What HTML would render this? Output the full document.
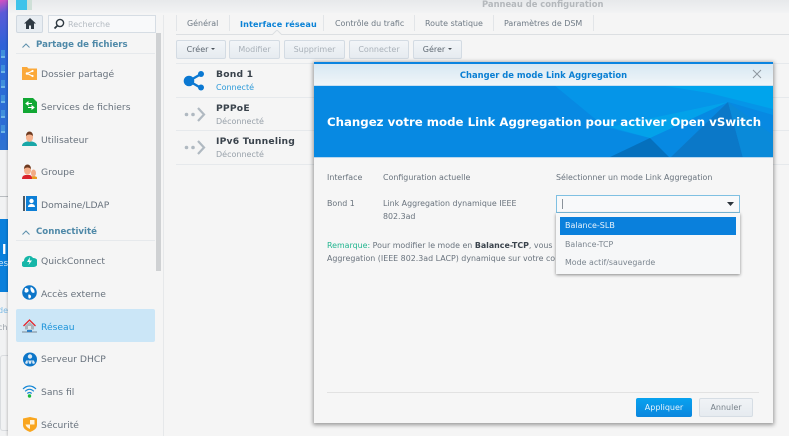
<!DOCTYPE html>
<html><head><meta charset="utf-8"><style>
html,body{margin:0;padding:0;width:789px;height:436px;overflow:hidden;background:#f5f5f5}
body{position:relative;font-family:"DejaVu Sans","Liberation Sans",sans-serif;font-size:9px;color:#6a7480;filter:blur(.35px)}
.a{position:absolute;white-space:nowrap}
.nav{font-size:9.2px;color:#68727d}
.sec{font-size:8.6px;font-weight:bold;color:#4f89a8}
.tab{font-size:7.95px;color:#6f7a85;top:19px}
.sep{position:absolute;width:1px;background:#e2e5e8;top:15px;height:16px}
.btn{position:absolute;top:40px;height:19px;box-sizing:border-box;border:1px solid #d3dbe3;border-radius:2px;background:linear-gradient(#f2f5f8,#e6ebf0);font-size:8px;text-align:center;line-height:17px;color:#5f6973}
.btn.dis{color:#a9b1b9}
.car{display:inline-block;border:2px solid transparent;border-top:2px solid #4a525a;border-bottom:0;margin-left:3px;vertical-align:2px}
.title{font-size:9.2px;font-weight:bold;color:#3a434c;left:216px;letter-spacing:.2px}
.st{font-size:8px;color:#98a1aa;left:216px}
.line{position:absolute;height:1px;background:#e6e9ec}
.m{font-size:7.9px;color:#69737d}
</style></head><body>
<!-- desktop behind -->
<div class="a" style="left:0;top:0;width:8px;height:150px;background:linear-gradient(160deg,#d84fc0 0,#5a5ad8 9%,#2f62d8 30%,#2b6cd6 65%,#2f74d2 100%)"></div>
<div class="a" style="left:1px;top:50px;width:4px;height:90px;background:repeating-linear-gradient(#3f8fdc 0 6px,#6fb6e6 6px 8px,#2b6cd6 8px 15px)"></div>
<div class="a" style="left:0;top:150px;width:8px;height:286px;background:#f1f2f3"></div>
<div class="a" style="left:0;top:196px;width:8px;height:1px;background:#b9bdc1"></div>
<div class="a" style="left:0;top:219px;width:8px;height:73px;background:#0a80dc"></div>
<div class="a" style="top:243px;font-size:13px;font-weight:bold;color:#fff;left:2px">l</div>
<div class="a" style="left:-2px;top:259px;font-size:9px;color:#d5e9f8">es</div>
<div class="a" style="left:-2px;top:306px;font-size:8px;color:#7dbbe6">de</div>
<div class="a" style="left:-2px;top:323px;font-size:8px;color:#9aa2aa">ch</div>
<div class="a" style="left:0;top:355px;width:8px;height:76px;box-sizing:border-box;border:1px solid #d9dcdf;border-right:0;border-radius:3px 0 0 3px"></div>
<!-- window -->
<div class="a" style="left:8px;top:0;width:781px;height:436px;background:#f5f5f5;box-shadow:-1px 0 2px rgba(0,0,0,.18)"></div>
<div class="a" style="left:8px;top:0;width:781px;height:13px;background:linear-gradient(#e7e9eb,#f2f3f4)"></div>
<div class="a" style="left:482px;top:-1px;font-size:8.4px;font-weight:bold;color:#b4b8bc">Panneau de configuration</div>
<div class="a" style="left:16px;top:0;width:16px;height:10px;background:linear-gradient(90deg,#3fc3ea 0 11px,#cfe0d8 11px)"></div>
<!-- home + search -->
<div class="a" style="left:16px;top:15px;width:27px;height:18px;box-sizing:border-box;background:#e8edf2;border:1px solid #d0d8e0;border-radius:2px"></div>
<svg class="a" style="left:23px;top:17px" width="14" height="13" viewBox="0 0 14 13"><path d="M7 1 1 6.500h2V12h3V8.500h2V12h3V6.500h2z" fill="#2f3a44"/></svg>
<div class="a" style="left:48px;top:15px;width:108px;height:18px;box-sizing:border-box;background:#f8f9fa;border:1px solid #d6dde4"></div>
<svg class="a" style="left:53px;top:18px" width="12" height="12" viewBox="0 0 12 12"><circle cx="7" cy="5" r="3.600" fill="none" stroke="#2e3840" stroke-width="1.400"/><path d="M4.500 7.500 1.500 10.500" stroke="#2e3840" stroke-width="1.800"/></svg>
<div class="a" style="left:68px;top:20px;font-size:8px;color:#b4bbc2">Recherche</div>
<!-- sidebar -->
<svg class="a" style="left:21px;top:42px" width="10" height="7"><path d="M1.500 5.500 5 2l3.500 3.500" fill="none" stroke="#5d8fab" stroke-width="1"/></svg>
<div class="a sec" style="left:36px;top:40px">Partage de fichiers</div>
<div class="line" style="left:16px;top:53px;width:139px"></div>
<div class="a" style="left:156px;top:33px;width:5px;height:238px;background:#cfd1d3"></div>
<div class="a" style="left:163px;top:15px;width:1px;height:421px;background:#e6e8ea"></div>

<svg class="a" style="left:22px;top:66px" width="15" height="14"><path d="M0 1h5l1.500 1.500H15V14H0z" fill="#fba93a"/><path d="M5 7.500 10.500 5M5 7.500l5.500 2.500" stroke="#fff" stroke-width="1"/><circle cx="5" cy="7.500" r="1.300" fill="#fff"/><circle cx="10.500" cy="5" r="1.100" fill="#fff"/><circle cx="10.500" cy="10" r="1.100" fill="#fff"/></svg>
<div class="a nav" style="left:41px;top:69px">Dossier partagé</div>
<svg class="a" style="left:23px;top:98px" width="14" height="15"><path d="M0 0h10l4 4v11H0z" fill="#11a733"/><path d="M3 5.500h6M3 5.500l2-1.500v3zM11 9.500H5M11 9.500l-2-1.500v3z" stroke="#fff" fill="#fff" stroke-width="1"/></svg>
<div class="a nav" style="left:41px;top:102px">Services de fichiers</div>
<svg class="a" style="left:22px;top:131px" width="15" height="15"><path d="M0 15c0-3 3-4 5-4.500h5c2 .5 5 1.500 5 4.500z" fill="#19a7a8"/><ellipse cx="7.500" cy="6" rx="3.600" ry="5" fill="#f6b38f"/><path d="M4 5c0-6 7-6 7 0-2-2-5-2-7 0z" fill="#6e3b20"/></svg>
<div class="a nav" style="left:41px;top:135px">Utilisateur</div>
<svg class="a" style="left:22px;top:164px" width="15" height="15"><path d="M9 15c0-3 2-4 6-2v2z" fill="#e99a20"/><ellipse cx="11.500" cy="9" rx="2.500" ry="3.500" fill="#f2ab85"/><path d="M0 15c0-3 2-4 4-4h3c2 0 3 1 3 4z" fill="#d9232c"/><ellipse cx="5.500" cy="6" rx="3.500" ry="4.800" fill="#f4ad88"/><path d="M2 5c0-6 7-6 7 0-2-2-5-2-7 0z" fill="#6d3a1f"/></svg>
<div class="a nav" style="left:41px;top:167px">Groupe</div>
<svg class="a" style="left:23px;top:196px" width="14" height="15"><rect width="2" height="15" fill="#4d5964"/><rect x="3" width="11" height="15" fill="#0d7fd6"/><circle cx="8.500" cy="5" r="2.200" fill="#fff"/><path d="M5 11c0-2 1.500-3 3.500-3S12 9 12 11z" fill="#fff"/></svg>
<div class="a nav" style="left:41px;top:200px">Domaine/LDAP</div>

<svg class="a" style="left:21px;top:229px" width="10" height="7"><path d="M1.500 5.500 5 2l3.500 3.500" fill="none" stroke="#5d8fab" stroke-width="1"/></svg>
<div class="a sec" style="left:36px;top:227px">Connectivité</div>
<div class="line" style="left:16px;top:240px;width:139px"></div>

<svg class="a" style="left:22px;top:254px" width="15" height="13"><path d="M3 13a3 3 0 0 1-1-6 5 5 0 0 1 9-3 4.500 4.500 0 0 1 1 9z" fill="#16b6a8"/><path d="M8 3 5 8h2.500L6.500 11 10 6.500H7.500z" fill="#fff"/></svg>
<div class="a nav" style="left:41px;top:256px">QuickConnect</div>
<svg class="a" style="left:22px;top:285px" width="15" height="15"><circle cx="7.500" cy="7.500" r="7.300" fill="#0d76c9"/><path d="M3 3c2 0 4 1 3.500 3S3 8 2.500 6.500zM9 2c2 1 4 3 3.500 5.500-1.500 1-3 0-3.500-1.500S8 3 9 2zM6.500 9.500c1.500 0 3 1 2.500 2.500s-1.500 1.500-2 1.500-1-2.500-.5-4z" fill="#fff"/></svg>
<div class="a nav" style="left:41px;top:289px">Accès externe</div>
<div class="a" style="left:16px;top:309px;width:139px;height:33px;background:#cbe6f7;border-radius:2px"></div>
<svg class="a" style="left:22px;top:318px" width="15" height="15"><path d="M7.500 4 3 8v3.500h9V8z" fill="#aab4bc"/><path d="M1.500 8 7.500 2l6 6" fill="none" stroke="#e5242c" stroke-width="1.300"/><rect x="6" y="8" width="3" height="3" fill="#dfe5ea"/><path d="M0 14h15" stroke="#7a8894" stroke-width="1"/><rect x="5" y="12" width="5" height="2" fill="#2e7fc4"/></svg>
<div class="a nav" style="left:41px;top:322px;color:#1c93d9">Réseau</div>
<svg class="a" style="left:23px;top:352px" width="14" height="15"><circle cx="7" cy="7.500" r="7" fill="#0d76c9"/><circle cx="7" cy="4.500" r="2.200" fill="#dbe9f4"/><path d="M3 9h8" stroke="#dbe9f4"/><circle cx="3.500" cy="10.500" r="1.300" fill="#dbe9f4"/><circle cx="7" cy="10.500" r="1.300" fill="#dbe9f4"/><circle cx="10.500" cy="10.500" r="1.300" fill="#dbe9f4"/></svg>
<div class="a nav" style="left:41px;top:354px">Serveur DHCP</div>
<svg class="a" style="left:22px;top:384px" width="15" height="14"><path d="M1 5c4-4 9-4 13 0M3.200 7.300c2.700-2.600 5.900-2.600 8.600 0M5.300 9.500c1.400-1.200 3-1.200 4.400 0" fill="none" stroke="#1487d6" stroke-width="1.200"/><circle cx="7.500" cy="12" r="1.700" fill="#19b83c"/></svg>
<div class="a nav" style="left:41px;top:387px">Sans fil</div>
<svg class="a" style="left:23px;top:417px" width="14" height="15"><path d="M0 1.500 7 0l7 1.500V8c0 3.500-3 5.500-7 7-4-1.500-7-3.500-7-7z" fill="#f9a61f"/><path d="M7 3h4.500v4.500H7zM2.500 7.500H7V12c-2.500-1-4-2.500-4.500-4.500z" fill="#fff3dc"/></svg>
<div class="a nav" style="left:41px;top:420px">Sécurité</div>

<!-- tabs -->
<div class="sep" style="left:176px"></div>
<div class="a tab" style="left:187px">Général</div>
<div class="sep" style="left:229px"></div>
<div class="a tab" style="left:240px;color:#0a82d6;font-weight:bold;font-size:8.1px;letter-spacing:.1px">Interface réseau</div>
<div class="sep" style="left:323px"></div>
<div class="a tab" style="left:335px">Contrôle du trafic</div>
<div class="sep" style="left:414px"></div>
<div class="a tab" style="left:425px">Route statique</div>
<div class="sep" style="left:493px"></div>
<div class="a tab" style="left:504px">Paramètres de DSM</div>
<div class="sep" style="left:593px"></div>
<div class="a" style="left:176px;top:34px;width:613px;height:1px;background:#dcdfe2"></div>
<svg class="a" style="left:272px;top:30px" width="10" height="5"><path d="M0 5 5 0l5 5" fill="#f5f5f5" stroke="#dcdfe2"/></svg>

<div class="btn" style="left:176px;width:50px">Créer<span class="car"></span></div>
<div class="btn dis" style="left:229px;width:51px">Modifier</div>
<div class="btn dis" style="left:284px;width:61px">Supprimer</div>
<div class="btn dis" style="left:349px;width:60px">Connecter</div>
<div class="btn" style="left:413px;width:49px">Gérer<span class="car"></span></div>
<div class="line" style="left:176px;top:63px;width:613px"></div>
<div class="line" style="left:176px;top:97px;width:613px"></div>
<div class="line" style="left:176px;top:130px;width:613px"></div>
<div class="line" style="left:176px;top:164px;width:613px"></div>

<svg class="a" style="left:183px;top:70px" width="23" height="22"><path d="M6 11 18 4M6 11l12 7" stroke="#0a78d2" stroke-width="2.400"/><circle cx="6" cy="11" r="5.300" fill="#0a78d2"/><circle cx="18" cy="4" r="3" fill="#0a78d2"/><circle cx="18" cy="17.500" r="3" fill="#0a78d2"/></svg>
<div class="a title" style="top:69px">Bond 1</div>
<div class="a st" style="top:83px;color:#2d9ad9">Connecté</div>
<svg class="a" style="left:184px;top:106px" width="22" height="17"><circle cx="2.500" cy="8.500" r="1.800" fill="#b0b9c1"/><circle cx="9" cy="8.500" r="1.800" fill="#b0b9c1"/><path d="M14 2l6 6.500L14 15" fill="none" stroke="#b0b9c1" stroke-width="2.200"/></svg>
<div class="a title" style="top:103px">PPPoE</div>
<div class="a st" style="top:117px">Déconnecté</div>
<svg class="a" style="left:184px;top:139px" width="22" height="17"><circle cx="2.500" cy="8.500" r="1.800" fill="#b0b9c1"/><circle cx="9" cy="8.500" r="1.800" fill="#b0b9c1"/><path d="M14 2l6 6.500L14 15" fill="none" stroke="#b0b9c1" stroke-width="2.200"/></svg>
<div class="a title" style="top:136px">IPv6 Tunneling</div>
<div class="a st" style="top:150px">Déconnecté</div>

<!-- modal -->
<div class="a" style="left:314px;top:62px;width:459px;height:361px;background:#f6f6f6;box-shadow:0 1px 4px 1px rgba(0,0,0,.38)"></div>
<div class="a" style="left:314px;top:62px;width:459px;height:2px;background:#0a84e0"></div>
<div class="a" style="left:314px;top:64px;width:459px;height:21px;background:linear-gradient(#d7e8f3,#f0f5f8)"></div>
<div class="a" style="left:314px;top:70px;width:459px;text-align:center;font-size:8.4px;font-weight:bold;color:#0a7fd3">Changer de mode Link Aggregation</div>
<svg class="a" style="left:752px;top:69px" width="10" height="10"><path d="M1 1l8 8M9 1 1 9" stroke="#8e979f" stroke-width="1"/></svg>
<svg class="a" style="left:314px;top:85px" width="459" height="73" viewBox="0 0 459 73"><rect width="459" height="73" fill="#0789e2"/><path d="M240 0h219v30l-45-13-78 36-45-11z" fill="#0595e8"/><path d="M345 0h114v24L395 8z" fill="#00a4ec"/><path d="M336 53 296 42 414 17z" fill="#03a2ea"/><path d="M294 73 336 53 356 73z" fill="#0570bd"/><path d="M356 73 414 17 429 73z" fill="#0b78c8"/><path d="M414 17 459 50V73H429z" fill="#0a8ad9"/><rect y="0" width="459" height="1" fill="#c8e0f2"/><rect y="72" width="459" height="1" fill="#b9d7ee"/></svg>
<div class="a" style="left:327px;top:115px;font-size:11.76px;font-weight:bold;color:#fff">Changez votre mode Link Aggregation pour activer Open vSwitch</div>

<div class="a m" style="left:327px;top:173px">Interface</div>
<div class="a m" style="left:383px;top:173px">Configuration actuelle</div>
<div class="a m" style="left:556px;top:173px">Sélectionner un mode Link Aggregation</div>
<div class="a m" style="left:327px;top:199px">Bond 1</div>
<div class="a m" style="left:383px;top:199px">Link Aggregation dynamique IEEE</div>
<div class="a m" style="left:383px;top:212px">802.3ad</div>
<div class="a m" style="left:327px;top:241px;width:229px;overflow:hidden"><span style="color:#22b58f">Remarque:</span> Pour modifier le mode en <b style="color:#3b444d">Balance-TCP</b>, vous</div>
<div class="a m" style="left:327px;top:254px;width:229px;overflow:hidden">Aggregation (IEEE 802.3ad LACP) dynamique sur votre co</div>

<div class="a" style="left:556px;top:195px;width:184px;height:18px;box-sizing:border-box;background:#f8f9fa;border:1px solid #7fc0e2"></div>
<div class="a" style="left:562px;top:199px;width:1px;height:10px;background:#8a929a"></div>
<svg class="a" style="left:727px;top:202px" width="7" height="4"><path d="M0 0h7L3.500 4z" fill="#2c343c"/></svg>
<div class="a" style="left:556px;top:213px;width:184px;height:61px;background:#f6f7f8;box-shadow:0 1px 3px rgba(0,0,0,.45)"></div>
<div class="a" style="left:560px;top:217px;width:176px;height:18px;background:#0a80dc"></div>
<div class="a" style="left:565px;top:221px;font-size:8px;color:#e8f3fb">Balance-SLB</div>
<div class="a m" style="left:565px;top:240px;color:#7b858f">Balance-TCP</div>
<div class="a m" style="left:565px;top:258px;color:#7b858f">Mode actif/sauvegarde</div>

<div class="line" style="left:327px;top:392px;width:432px;background:#e2e2e2"></div>
<div class="a" style="left:636px;top:398px;width:56px;height:19px;background:linear-gradient(#08a2ef,#0a86de);border-radius:2px;text-align:center;font-size:8px;line-height:19px;color:#e3f3fc">Appliquer</div>
<div class="a" style="left:699px;top:398px;width:54px;height:19px;box-sizing:border-box;background:linear-gradient(#f0f3f6,#e6ebf0);border:1px solid #d6dde4;border-radius:2px;text-align:center;font-size:8px;line-height:17px;color:#78828b">Annuler</div>
</body></html>
